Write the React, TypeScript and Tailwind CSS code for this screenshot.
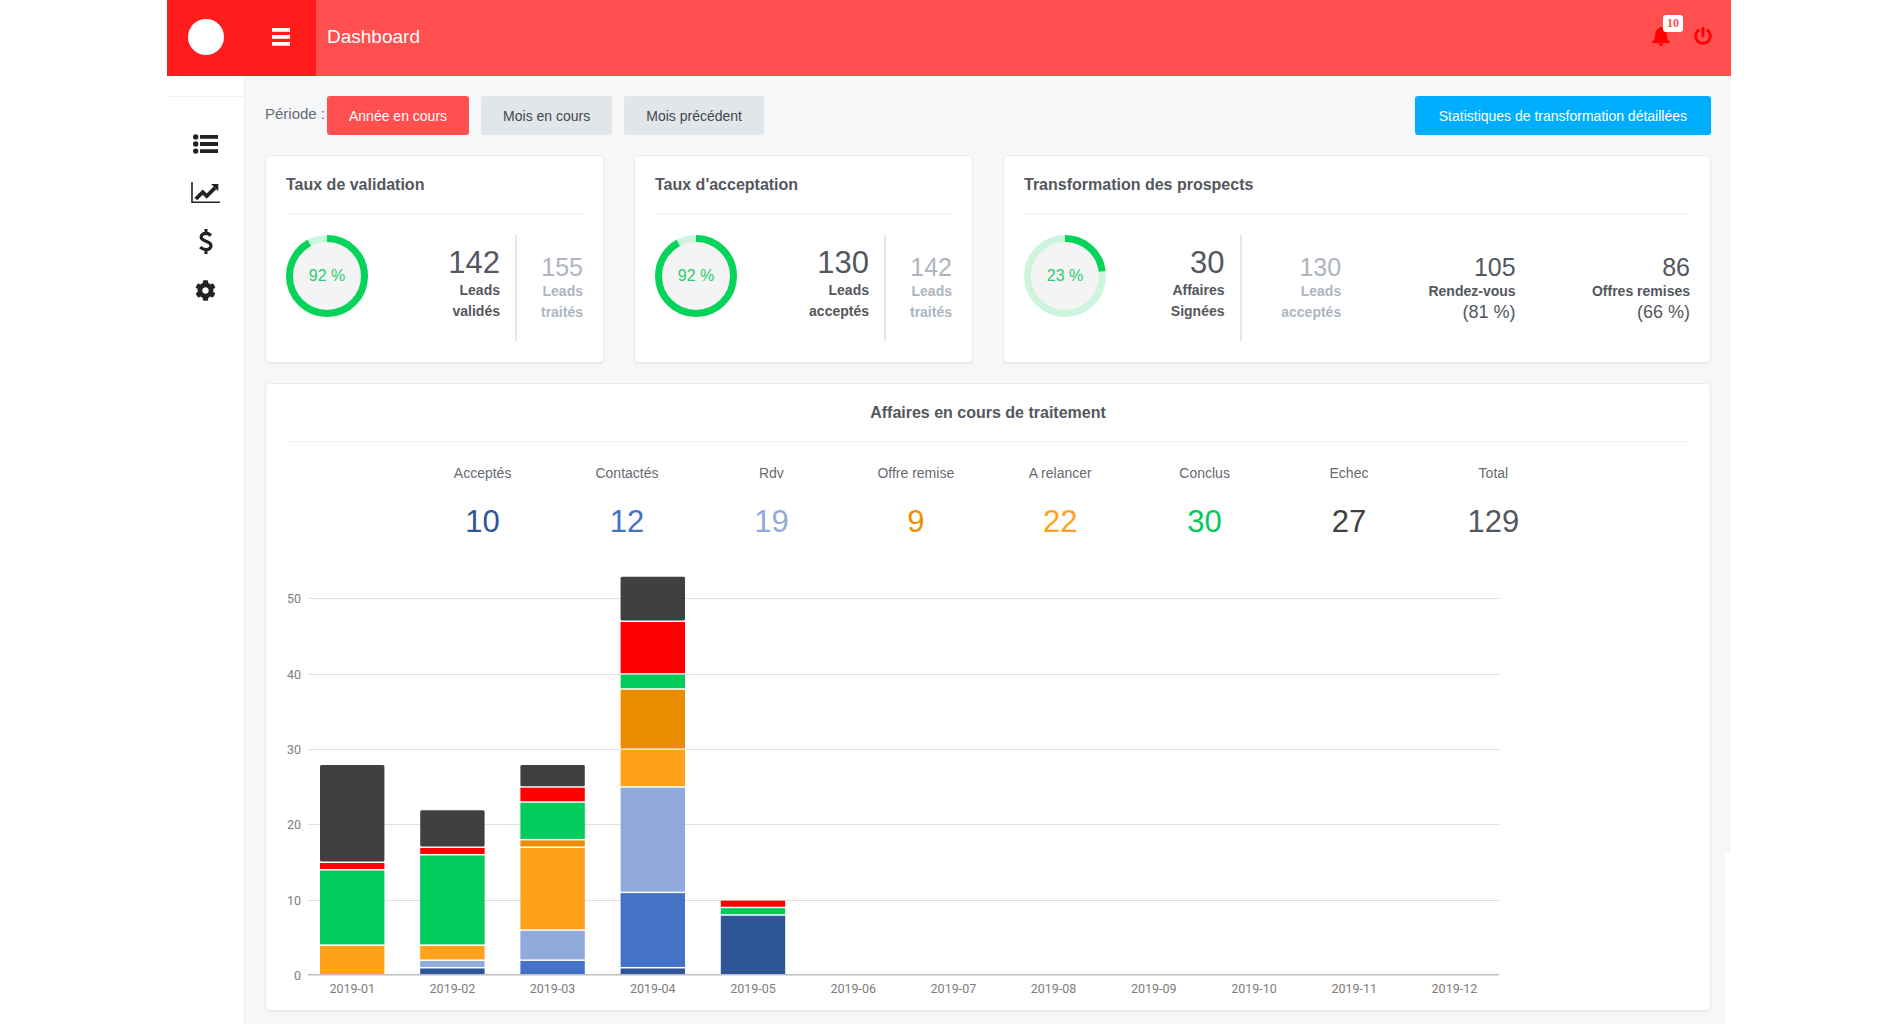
import React from "react";
import { FaCog, FaPowerOff } from "react-icons/fa";

type Tone = "main" | "muted" | "normal";

function Ring({ value }: { value: number }) {
  const length = 2 * Math.PI * 37.5;
  return (
    <div className="grid h-[82px] w-[82px] shrink-0 place-items-center">
      <svg viewBox="0 0 82 82" className="col-start-1 row-start-1 h-full w-full" aria-hidden="true">
        <g transform="rotate(-90 41 41)" strokeWidth="7">
          <circle cx="41" cy="41" r="37.5" fill="#f4f4f5" stroke="#cdf4dd" />
          <circle cx="41" cy="41" r="37.5" fill="none" stroke="#05d35a" strokeDasharray={`${(length * value) / 100} ${length}`} />
        </g>
      </svg>
      <span className="z-10 col-start-1 row-start-1 text-[16px] leading-[20px] text-[#27cf6d]">{value} %</span>
    </div>
  );
}

function Stat({ value, lines, tone, note, className = "" }: { value: number; lines: string[]; tone: Tone; note?: string; className?: string }) {
  const color = tone === "muted" ? "text-[#adb5bf]" : "text-[#54575e]";
  const size = tone === "main" ? "text-[31px] leading-[34px] pt-[11px]" : "text-[25px] leading-[27px] pt-[19px]";
  return (
    <div className={`text-right ${color} ${className}`}>
      <p className={size}>{value}</p>
      {lines.map((line) => (
        <p key={line} className="text-[14px] font-bold leading-[21px] whitespace-nowrap">{line}</p>
      ))}
      {note && <p className="text-[18px] leading-[21px]">{note}</p>}
    </div>
  );
}

function Card({ title, center = false, className = "", children }: { title: string; center?: boolean; className?: string; children: React.ReactNode }) {
  return (
    <section className={`rounded border border-[#e9ebee] bg-white px-5 shadow-[0_1px_1px_#e6e8eb] ${className}`}>
      <h2 className={`border-b border-[#f0f1f2] py-[18px] text-[16px] font-bold leading-[21px] text-[#54575e] ${center ? "text-center" : ""}`}>{title}</h2>
      {children}
    </section>
  );
}

const kpis = [
  { label: "Acceptés", value: 10, color: "text-[#2d5597]" },
  { label: "Contactés", value: 12, color: "text-[#4472c6]" },
  { label: "Rdv", value: 19, color: "text-[#8faadb]" },
  { label: "Offre remise", value: 9, color: "text-[#ee8f00]" },
  { label: "A relancer", value: 22, color: "text-[#ffa11a]" },
  { label: "Conclus", value: 30, color: "text-[#00cb5b]" },
  { label: "Echec", value: 27, color: "text-[#404040]" },
  { label: "Total", value: 129, color: "text-[#54575e]" },
];

const palette = ["#2d5597", "#4472c6", "#8faadb", "#ffa11a", "#eb8c00", "#00cb5b", "#ff0000", "#404040"];

const stacks = [
  [0, 0, 0, 4, 0, 10, 1, 13],
  [1, 0, 1, 2, 0, 12, 1, 5],
  [0, 2, 4, 11, 1, 5, 2, 3],
  [1, 10, 14, 5, 8, 2, 7, 6],
  [8, 0, 0, 0, 0, 1, 1, 0],
  [], [], [], [], [], [], [],
];

const UNIT = 7.533;
const BASE = 415;

function Chart() {
  return (
    <svg viewBox="0 0 1404 450" className="mt-5 block w-full" role="img" aria-label="Affaires en cours de traitement par mois" fontFamily="Roboto, sans-serif" fontSize="12.5" fill="#7d7d7d">
      {[50, 40, 30, 20, 10].map((v) => (
        <rect key={v} x="22" y={Math.round(BASE - v * UNIT)} width="1191" height="1" fill="#dfdfdf" />
      ))}
      {[50, 40, 30, 20, 10, 0].map((v) => (
        <text key={v} x="15" y={BASE - v * UNIT + 5} textAnchor="end">{v}</text>
      ))}
      {stacks.map((stack, month) => {
        let total = 0;
        const x = 34 + month * 100.2;
        return (
          <g key={month}>
            {stack.map((n, i) => {
              total += n;
              return n ? (
                <rect key={i} x={x} y={BASE - total * UNIT + 1} width="64.4" height={n * UNIT - 1.5} rx={i === 7 ? 1.5 : 0} fill={palette[i]} />
              ) : null;
            })}
            <text x={x + 32.2} y={BASE + 18} textAnchor="middle">{`2019-${String(month + 1).padStart(2, "0")}`}</text>
          </g>
        );
      })}
      <rect x="22" y={BASE - 1} width="1191" height="1.5" fill="#bdbdbd" />
    </svg>
  );
}

function MenuIcon() {
  return (
    <svg viewBox="0 0 18 18" className="h-[18px] w-[18px]" fill="currentColor" aria-hidden="true">
      <path d="M0 0h18v3.700H0zM0 7h18v3.700H0zM0 14h18v3.700H0z" />
    </svg>
  );
}

function ListIcon() {
  return (
    <svg viewBox="0 0 25 20" className="h-5 w-[25px]" fill="currentColor" aria-hidden="true">
      <circle cx="2.700" cy="2.900" r="2.700" />
      <circle cx="2.700" cy="10" r="2.700" />
      <circle cx="2.700" cy="17.100" r="2.700" />
      <path d="M7 1h18v3.800H7zM7 8.100h18v3.800H7zM7 15.200h18v3.800H7z" />
    </svg>
  );
}

function TrendIcon() {
  return (
    <svg viewBox="0 0 29 21" className="h-[21px] w-[29px]" fill="none" stroke="currentColor" aria-hidden="true">
      <path d="M1 0v20.200H29" strokeWidth="1.600" />
      <path d="M4.800 17l6.900-6.900 4 4 8.300-8.300" strokeWidth="3.800" />
      <path d="M20 2h7.300v7.300z" fill="currentColor" stroke="none" />
    </svg>
  );
}

function DollarIcon() {
  return (
    <svg viewBox="0 0 14 25" className="h-[25px] w-[14px]" fill="none" stroke="currentColor" strokeWidth="3.300" aria-hidden="true">
      <path d="M12 6.400C10.400 5 8.800 4.400 6.900 4.400c-2.700 0-4.700 1.400-4.700 3.700 0 4.900 9.800 3.400 9.800 8.500 0 2.600-2.200 4-5 4-2.300 0-4.200-.8-5.800-2.400" />
      <path d="M7 0v4.500M7 20.500V25" strokeWidth="3" />
    </svg>
  );
}

const periodButton = "h-[39px] cursor-pointer rounded-[3px] pt-0.5 text-[14px]";

export default function App() {
  return (
    <div className="min-h-screen bg-white font-['Liberation_Sans',Arial,sans-serif]">
      <div className="mx-[167px] flex min-h-screen flex-col">
        <header className="flex h-[76px] bg-[#ff4f4f]">
          <div className="flex w-[149px] items-center bg-[#ff1c1c] pb-0.5 pl-[21px]">
            <a href="#" aria-label="Accueil" className="h-9 w-9 rounded-full bg-white" />
            <button type="button" aria-label="Menu" className="ml-12 cursor-pointer text-white"><MenuIcon /></button>
          </div>
          <h1 className="flex-1 self-center pb-0.5 pl-[11px] text-[19px] leading-[22px] text-white">Dashboard</h1>
          <div className="flex items-center gap-6 pr-[19px] pb-1 text-[#ff0000]">
            <button type="button" aria-label="Notifications" className="relative cursor-pointer">
              <svg viewBox="0 0 18 19" className="h-[19px] w-[18px]" fill="currentColor" aria-hidden="true">
                <path d="M9 0c.8 0 1.300.5 1.300 1.200 2.900.6 4.500 2.800 4.500 5.800 0 4 1 6.500 3.200 8v1H0v-1c2.200-1.500 3.200-4 3.200-8 0-3 1.600-5.200 4.500-5.800C7.700.5 8.200 0 9 0zM6.500 16.500h5a2.500 2.500 0 0 1-5 0z" />
              </svg>
              <span className="absolute -top-3 left-[11px] rounded-[3px] bg-white px-1 font-['Liberation_Serif',serif] text-[12px] font-bold leading-[17px] text-[#ff4f4f]">10</span>
            </button>
            <button type="button" aria-label="Déconnexion" className="cursor-pointer text-[18px]"><FaPowerOff /></button>
          </div>
        </header>
        <div className="flex flex-1">
          <nav className="w-[78px] shrink-0 border-r border-[#eef0f2] pt-5">
            <ul className="flex flex-col items-center gap-5 border-t border-[#f0f1f2] pt-8 text-[#222]">
              <li><a href="#" aria-label="Liste" className="grid h-[29px] place-items-center"><ListIcon /></a></li>
              <li><a href="#" aria-label="Statistiques" className="grid h-[29px] place-items-center"><TrendIcon /></a></li>
              <li><a href="#" aria-label="Facturation" className="grid h-[29px] place-items-center"><DollarIcon /></a></li>
              <li><a href="#" aria-label="Paramètres" className="grid h-[29px] place-items-center text-[21px]"><FaCog /></a></li>
            </ul>
          </nav>
          <main className="relative min-w-0 flex-1 bg-[#f6f7f9] px-5 pt-5">
            <div className="flex items-center">
              <span className="mr-1 w-[58px] whitespace-nowrap pb-0.5 text-[15px] text-[#666a72]">Période :</span>
              <div className="flex gap-3">
                <button type="button" className={`${periodButton} bg-[#ff4f4f] px-[22px] text-white`}>Année en cours</button>
                <button type="button" className={`${periodButton} bg-[#e2e6e9] px-[22px] text-[#43484e]`}>Mois en cours</button>
                <button type="button" className={`${periodButton} bg-[#e2e6e9] px-[22px] text-[#43484e]`}>Mois précédent</button>
              </div>
              <button type="button" className={`${periodButton} ml-auto bg-[#00aeff] px-6 text-white`}>Statistiques de transformation détaillées</button>
            </div>
            <div className="mt-5 grid grid-cols-4 gap-x-[30px] gap-y-5">
              <Card title="Taux de validation">
                <div className="flex py-[21px]">
                  <Ring value={92} />
                  <Stat tone="main" value={142} lines={["Leads", "validés"]} className="ml-auto h-[106px] border-r-2 border-[#e6e7ea] pr-[15px]" />
                  <Stat tone="muted" value={155} lines={["Leads", "traités"]} className="w-[66px]" />
                </div>
              </Card>
              <Card title="Taux d'acceptation">
                <div className="flex py-[21px]">
                  <Ring value={92} />
                  <Stat tone="main" value={130} lines={["Leads", "acceptés"]} className="ml-auto h-[106px] border-r-2 border-[#e6e7ea] pr-[15px]" />
                  <Stat tone="muted" value={142} lines={["Leads", "traités"]} className="w-[66px]" />
                </div>
              </Card>
              <Card title="Transformation des prospects" className="col-span-2">
                <div className="grid grid-cols-[82px_136fr_100fr_175fr_175fr] py-[21px]">
                  <Ring value={23} />
                  <Stat tone="main" value={30} lines={["Affaires", "Signées"]} className="h-[106px] border-r-2 border-[#e6e7ea] pr-[15px]" />
                  <Stat tone="muted" value={130} lines={["Leads", "acceptés"]} />
                  <Stat tone="normal" value={105} lines={["Rendez-vous"]} note="(81 %)" />
                  <Stat tone="normal" value={86} lines={["Offres remises"]} note="(66 %)" />
                </div>
              </Card>
              <Card title="Affaires en cours de traitement" center className="col-span-4">
                <dl className="-mx-5 grid grid-cols-10 pt-5 text-center">
                  {kpis.map((k) => (
                    <div key={k.label} className="first:col-start-2">
                      <dt className="text-[14px] leading-[22px] text-[#666a72]">{k.label}</dt>
                      <dd className={`mt-5 text-[31px] leading-[36px] ${k.color}`}>{k.value}</dd>
                    </div>
                  ))}
                </dl>
                <Chart />
              </Card>
            </div>
            <div className="absolute right-0 bottom-0 h-[171px] w-1.5 bg-white" />
          </main>
        </div>
      </div>
    </div>
  );
}
